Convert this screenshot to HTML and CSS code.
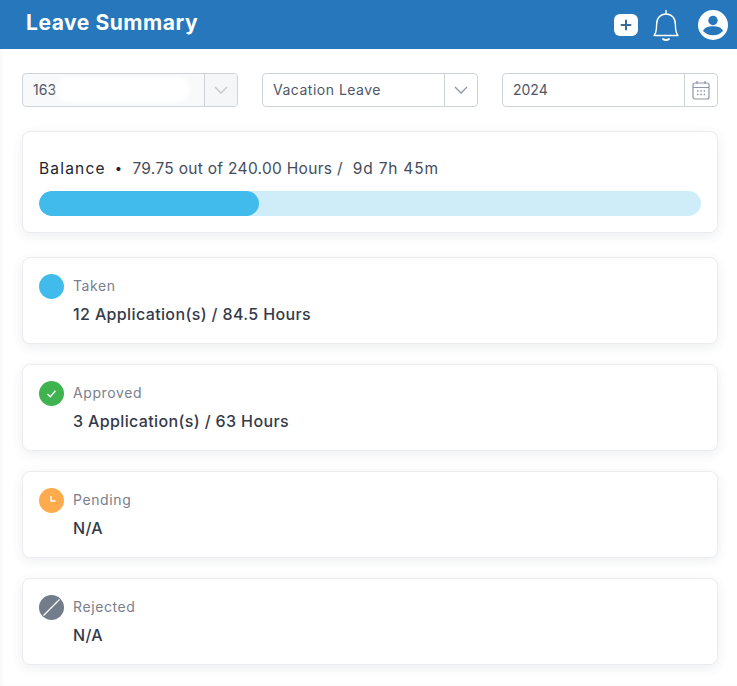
FILE: index.html
```html
<!DOCTYPE html>
<html>
    <head>
        <title>Leave Summary</title>
        <meta charset="UTF-8">
        <meta name="viewport" content="width=device-width">
        <link rel="stylesheet" href="styles.css">
    </head>
    <body>
        <div class="topbar">
            <h1 class="title">Leave Summary</h1>
            <div class="topIcons">
                <svg class="addIcon" width="24" height="22" viewBox="0 0 24 22"><rect width="24" height="22" rx="6" fill="#fff"/><path d="M12 6.500v9M7.500 11h9" stroke="#3b6c96" stroke-width="2" stroke-linecap="round"/></svg>
                <svg class="bellIcon" width="28" height="32" viewBox="0 0 28 32" fill="none" stroke="#fff" stroke-width="1.400"><path d="M14 1v4"/><path d="M2 26.500c2-2 2.600-4 2.600-11C4.600 9 8.500 5 14 5s9.400 4 9.400 10.500c0 7 .6 9 2.600 11z" stroke-linejoin="round"/><path d="M11 30c1.500 1.300 4.500 1.300 6 0" stroke-width="1.800" stroke-linecap="round"/></svg>
                <svg class="userIcon" width="30" height="30" viewBox="0 0 30 30"><circle cx="15" cy="15" r="15" fill="#fff"/><circle cx="15" cy="10.500" r="4.700" fill="#2677bb"/><path d="M5 21c1.500-3.800 5.500-4.800 10-4.800s8.500 1 10 4.800c-2.500 2.700-6 4.300-10 4.300s-7.500-1.600-10-4.300z" fill="#2677bb"/></svg>
            </div>
        </div>

        <div class="content">
            <div class="filters">
                <div class="field fieldGray">
                    <span class="fieldText">163</span>
                    <span class="smudge"></span>
                    <span class="fieldBtn"><svg width="14" height="8" viewBox="0 0 14 8" fill="none" stroke="#c3c8d0" stroke-width="1.300"><path d="M1 1l6 6 6-6"/></svg></span>
                </div>
                <div class="field">
                    <span class="fieldText wideText">Vacation Leave</span>
                    <span class="fieldBtn"><svg width="14" height="8" viewBox="0 0 14 8" fill="none" stroke="#8f96a3" stroke-width="1.300"><path d="M1 1l6 6 6-6"/></svg></span>
                </div>
                <div class="field">
                    <span class="fieldText">2024</span>
                    <span class="fieldBtn"><svg width="18" height="20" viewBox="0 0 18 20" fill="none" stroke="#8f96a3" stroke-width="1.200"><rect x="1" y="3" width="16" height="16" rx="2"/><path d="M1 7.500h16M5 1v3M13 1v3"/><path d="M5 11h1.500M8.300 11h1.500M11.600 11h1.500M5 14.500h1.500M8.300 14.500h1.500M11.600 14.500h1.500" stroke-width="1.400"/></svg></span>
                </div>
            </div>

            <div class="card balanceCard">
                <div class="balanceLine">
                    <span class="balanceLabel">Balance</span>
                    <span class="dot">&bull;</span>
                    <span>79.75 out of 240.00 Hours /</span>
                    <span class="duration">9d 7h 45m</span>
                </div>
                <div class="bar"><div class="barFill" style="width:33.23%"></div></div>
            </div>

            <div class="card statCard">
                <svg class="statIcon" width="25" height="25" viewBox="0 0 25 25"><circle cx="12.500" cy="12.500" r="12.500" fill="#41bbec"/></svg>
                <div>
                    <div class="statLabel">Taken</div>
                    <div class="statValue">12 Application(s) / 84.5 Hours</div>
                </div>
            </div>
            <div class="card statCard">
                <svg class="statIcon" width="25" height="25" viewBox="0 0 25 25"><circle cx="12.500" cy="12.500" r="12.500" fill="#3fb350"/><path d="M8.500 13l2.800 2.800 5.200-6" fill="none" stroke="#fff" stroke-width="1.300"/></svg>
                <div>
                    <div class="statLabel">Approved</div>
                    <div class="statValue">3 Application(s) / 63 Hours</div>
                </div>
            </div>
            <div class="card statCard">
                <svg class="statIcon" width="25" height="25" viewBox="0 0 25 25"><circle cx="12.500" cy="12.500" r="12.500" fill="#ffab4d"/><path d="M12 8v5h4.500" fill="none" stroke="#fff" stroke-width="1.400"/></svg>
                <div>
                    <div class="statLabel">Pending</div>
                    <div class="statValue">N/A</div>
                </div>
            </div>
            <div class="card statCard">
                <svg class="statIcon" width="25" height="25" viewBox="0 0 25 25"><circle cx="12.500" cy="12.500" r="12.500" fill="#737c8b"/><path d="M4.500 20.500l16-16" fill="none" stroke="#fff" stroke-width="1.300"/></svg>
                <div>
                    <div class="statLabel">Rejected</div>
                    <div class="statValue">N/A</div>
                </div>
            </div>
        </div>
    </body>
</html>
```

FILE: styles.css
```css
body{
    margin:0;
    background-color:#fff;
    color:#2d3444;
    font-family:"Inter","Open Sans",sans-serif;
}
.topbar{
    height:49px;
    background-color:#2677bb;
    display:flex;
    align-items:center;
    justify-content:space-between;
    padding:0 9px 0 26px;
}
.title{
    margin:0 0 4px 0;
    color:#fff;
    font-size:21px;
    font-weight:700;
    letter-spacing:0.55px;
}
.topIcons{
    display:flex;
    align-items:center;
}
.addIcon{
    margin-right:14px;
}
.bellIcon{
    margin-right:18px;
}
.content{
    padding:24px 19px 21px 22px;
    box-shadow:inset 2px 0 3px rgba(0,0,0,0.03);
}
.filters{
    display:grid;
    grid-template-columns:216px 216px 216px;
    column-gap:24px;
}
.field{
    height:34px;
    box-sizing:border-box;
    border:1px solid #ced3da;
    border-radius:4px;
    display:flex;
    align-items:center;
    background-color:#fff;
    overflow:hidden;
    position:relative;
}
.fieldGray{
    background-color:#f8f9fa;
}
.fieldText{
    flex:1;
    padding:0 0 2px 10px;
    font-size:14px;
    color:#4f5766;
}
.wideText{
    letter-spacing:0.5px;
}
.smudge{
    position:absolute;
    left:33px;
    top:3px;
    width:134px;
    height:25px;
    background-color:#fff;
    border-radius:12px;
    filter:blur(2px);
}
.fieldBtn{
    width:33px;
    height:100%;
    box-sizing:border-box;
    border-left:1px solid #ced3da;
    display:flex;
    align-items:center;
    justify-content:center;
}
.fieldGray .fieldBtn{
    background-color:#f5f6f7;
}
.card{
    box-sizing:border-box;
    background-color:#fff;
    border:1px solid #ebecf0;
    border-radius:8px;
    box-shadow:0 3px 12px rgba(60,70,90,0.09);
}
.balanceCard{
    height:102px;
    margin-top:24px;
    padding:26px 16px 0 16px;
}
.balanceLine{
    display:flex;
    align-items:center;
    font-size:15.500px;
    letter-spacing:0.3px;
    color:#454c5c;
    height:20px;
}
.balanceLabel{
    color:#20242e;
    letter-spacing:1.2px;
}
.dot{
    margin:0 10px 0 9px;
    color:#20242e;
    font-size:13px;
}
.duration{
    margin-left:10px;
    letter-spacing:0.8px;
}
.bar{
    height:25px;
    margin-top:13px;
    border-radius:13px;
    background-color:#cfecf9;
    overflow:hidden;
}
.barFill{
    height:100%;
    border-radius:13px;
    background-color:#41bbec;
}
.statCard{
    height:87px;
    margin-top:20px;
    padding:16px 16px 0 16px;
    display:flex;
    align-items:flex-start;
}
.balanceCard + .statCard{
    margin-top:24px;
}
.statIcon{
    flex:none;
    margin-right:9px;
}
.statLabel{
    font-size:14px;
    letter-spacing:0.6px;
    line-height:24px;
    color:#7a808c;
}
.statValue{
    font-size:16px;
    font-weight:500;
    letter-spacing:0.37px;
    line-height:24px;
    margin-top:4px;
    color:#343a4a;
}
```
